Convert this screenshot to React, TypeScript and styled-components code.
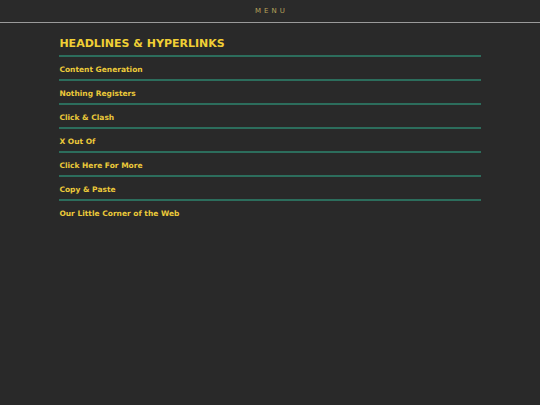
import React from 'react';
import styled, { createGlobalStyle } from 'styled-components';

const GlobalStyle = createGlobalStyle`
  html, body {
    margin: 0;
    padding: 0;
    background: #292929;
    font-family: 'DejaVu Sans', Verdana, sans-serif;
  }
`;

const Page = styled.div`
  min-height: 405px;
  background: #292929;
`;

const TopBar = styled.header`
  height: 22px;
  display: flex;
  align-items: center;
  justify-content: center;
  border-bottom: 1px solid #9a9a9a;
  background: #2a2a2a;
`;

const MenuLabel = styled.span`
  font-size: 7px;
  letter-spacing: 3px;
  color: #b8a35a;
  padding-left: 3px;
`;

const Content = styled.main`
  width: 78%;
  margin: 0 auto;
  padding-top: 14px;
`;

const Heading = styled.h1`
  margin: 0;
  font-size: 11px;
  font-weight: bold;
  color: #f0cf35;
  padding-bottom: 5px;
  border-bottom: 2px solid #2c6d5c;
`;

const LinkList = styled.ul`
  list-style: none;
  margin: 0;
  padding: 0;
`;

const LinkItem = styled.li<{ $last?: boolean }>`
  height: 20px;
  display: flex;
  align-items: center;
  padding-top: 2px;
  border-bottom: ${(p) => (p.$last ? '2px solid transparent' : '2px solid #2c6d5c')};
`;

const Link = styled.a`
  font-size: 7.5px;
  font-weight: bold;
  color: #ecc93a;
  text-decoration: none;
`;

const links = [
  'Content Generation',
  'Nothing Registers',
  'Click & Clash',
  'X Out Of',
  'Click Here For More',
  'Copy & Paste',
  'Our Little Corner of the Web',
];

export default function App() {
  return (
    <Page>
      <GlobalStyle />
      <TopBar>
        <MenuLabel>MENU</MenuLabel>
      </TopBar>
      <Content>
        <Heading>HEADLINES &amp; HYPERLINKS</Heading>
        <LinkList>
          {links.map((l, i) => (
            <LinkItem key={l} $last={i === links.length - 1}>
              <Link href="#">{l}</Link>
            </LinkItem>
          ))}
        </LinkList>
      </Content>
    </Page>
  );
}
